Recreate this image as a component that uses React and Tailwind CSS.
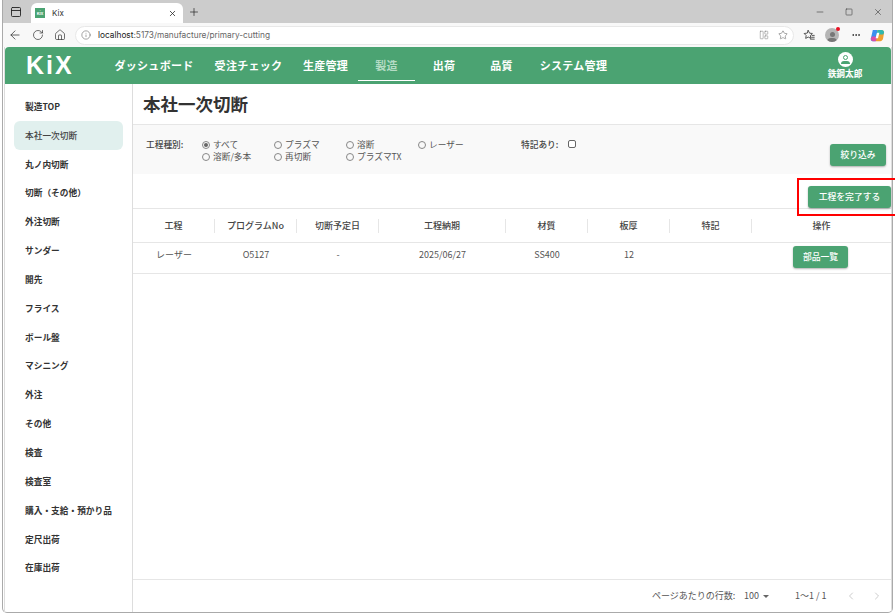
import { ArrowLeft, RotateCw, Home, Info, Star, Plus, X, Minus, Square, PanelTop, Ellipsis, ChevronLeft, ChevronRight, LayoutPanelLeft } from 'lucide-react'

const navItems = ['ダッシュボード', '受注チェック', '生産管理', '製造', '出荷', '品質', 'システム管理']
const navWidths = ['w-[100px]', 'w-[89px]', 'w-[65px]', 'w-[57px]', 'w-[58px]', 'w-[57px]', 'w-[87px]']

const sideItems = ['製造TOP', '本社一次切断', '丸ノ内切断', '切断（その他）', '外注切断', 'サンダー', '開先', 'フライス', 'ボール盤', 'マシニング', '外注', 'その他', '検査', '検査室', '購入・支給・預かり品', '定尺出荷', '在庫出荷']

const radios = ['すべて', 'プラズマ', '溶断', 'レーザー', '溶断/多本', '再切断', 'プラズマTX']

const columns = ['工程', 'プログラムNo', '切断予定日', '工程納期', '材質', '板厚', '特記', '操作']
const row = ['レーザー', 'O5127', '-', '2025/06/27', 'SS400', '12', '']

function Radio({ label, checked }) {
    return (
        <label className="flex items-center gap-[3px] h-3 text-[8.7px] text-[#555]">
            <span className="w-2 h-2 rounded-full border border-[#888] flex items-center justify-center shrink-0">
                {checked && <span className="w-1 h-1 rounded-full bg-[#666]" />}
            </span>
            {label}
        </label>
    )
}

function GreenButton({ children, className }) {
    return (
        <button className={`bg-[#4ba372] text-white text-[8.8px] font-medium rounded-[3px] shadow-[0_1px_2px_rgba(0,0,0,0.3)] ${className}`}>
            {children}
        </button>
    )
}

function Favorites() {
    return (
        <svg width="12" height="12" viewBox="0 0 16 16" fill="none" stroke="#333" strokeWidth="1.1" strokeLinejoin="round" strokeLinecap="round">
            <path d="M7 2l1.700 3.500 3.800.5-2.700 2.700.6 3.800L7 10.700 3.600 12.500l.6-3.800L1.500 6l3.800-.5z" />
            <path d="M12 8.500h3M11.500 11h3.500M10 13.500h5" />
        </svg>
    )
}

function Copilot() {
    return (
        <svg width="15" height="15" viewBox="0 0 16 16">
            <path d="M3 2h5L6 14H2.500C1 14 .5 12.500 1 11z" fill="#3b8ff0" />
            <path d="M8 2h4.500C14 2 15 3 15 5l-1 6c-.3 2-1.500 3-3 3H6z" fill="#f0a030" />
            <path d="M8 2h4.500C14 2 15 3 15 5l-1 2H7z" fill="#30b8b0" />
            <path d="M2 9h6l-2 5H3C1.500 14 .7 12.500 1 11z" fill="#d94fa8" />
            <path d="M7.500 5h2.500l-1.500 6H6z" fill="#fff" />
        </svg>
    )
}

export default function App() {
    return (
        <div className="w-[895px] h-[615px] overflow-hidden bg-white px-[2px] pb-[2px] font-['Noto_Sans_CJK_JP',sans-serif] relative">
            <div className="h-full flex flex-col border-l border-r border-b border-[#aaa] rounded-b-[5px]">
                {/* tab strip */}
                <div className="h-[23px] bg-[#cccccc] flex items-end shrink-0">
                    <div className="w-[25px] h-[23px] flex items-center justify-center">
                        <PanelTop size={12} strokeWidth={1.8} className="text-[#222]" />
                    </div>
                    <div className="ml-[3px] w-[152px] h-[20px] bg-white rounded-t-[6px] flex items-center pl-[4px] pr-[6px]">
                        <span className="w-[10px] h-[10px] bg-[#4ba372] text-white text-[4px] font-bold flex items-center justify-center">KiX</span>
                        <span className="ml-[7px] text-[8px] text-[#333] font-['Inter',sans-serif]">Kix</span>
                        <X size={9} strokeWidth={2} className="ml-auto text-[#222]" />
                    </div>
                    <div className="w-[22px] h-[23px] flex items-center justify-center">
                        <Plus size={12} strokeWidth={1.4} className="text-[#222]" />
                    </div>
                    <div className="ml-auto flex items-center h-[23px] text-[#333]">
                        <div className="w-[29px] flex justify-center"><Minus size={10} strokeWidth={1.4} /></div>
                        <div className="w-[29px] flex justify-center"><Square size={8} strokeWidth={1.6} /></div>
                        <div className="w-[29px] flex justify-center"><X size={10} strokeWidth={1.4} /></div>
                    </div>
                </div>

                {/* address bar */}
                <div className="h-[24px] bg-[#f8f8f8] flex items-center shrink-0 text-[#333]">
                    <div className="w-[23px] flex justify-center"><ArrowLeft size={14} strokeWidth={1.3} /></div>
                    <div className="w-[23px] flex justify-center"><RotateCw size={12} strokeWidth={1.4} /></div>
                    <div className="w-[22px] flex justify-center"><Home size={12} strokeWidth={1.4} /></div>
                    <div className="w-[719px] h-[19px] ml-[4px] bg-white rounded-full border border-[#e8e8e8] flex items-center pl-[5px] pr-[5px]">
                        <Info size={10} strokeWidth={1.4} className="text-[#666]" />
                        <span className="ml-[7px] text-[8.300px] text-[#666] font-['Inter',sans-serif]">
                            <span className="text-[#222]">localhost</span>:5173/manufacture/primary-cutting
                        </span>
                        <LayoutPanelLeft size={10} strokeWidth={1.2} className="ml-auto text-[#777]" />
                        <Star size={10} strokeWidth={1.2} className="ml-[9px] text-[#555]" />
                    </div>
                    <div className="w-[26px] ml-[2px] flex justify-center"><Favorites /></div>
                    <div className="w-[20px] flex justify-center relative">
                        <span className="w-[14px] h-[14px] rounded-full bg-[#b5b5b5] flex flex-col items-center justify-end overflow-hidden">
                            <span className="w-[5px] h-[5px] rounded-full bg-[#777]" />
                            <span className="w-[10px] h-[4px] rounded-t-full bg-[#777] mt-[1px]" />
                        </span>
                        <span className="absolute top-[-1px] right-[2px] w-[4px] h-[4px] rounded-full bg-[#e81123]" />
                    </div>
                    <div className="w-[24px] ml-[2px] flex justify-center"><Ellipsis size={10} strokeWidth={2} className="text-[#222]" /></div>
                    <div className="w-[18px] flex justify-center"><Copilot /></div>
                </div>

                {/* page */}
                <div className="flex-1 min-h-0 ml-[1px] flex flex-col border-l border-r border-[#ddd]">
                    <header className="h-[37px] bg-[#4ba372] rounded-t-[4px] flex items-center text-white shrink-0">
                        <span className="w-[99px] pl-[21px] text-[25px] font-bold leading-none tracking-[2px] font-['Liberation_Sans',sans-serif]">KiX</span>
                        {navItems.map((item, i) => (
                            <a key={item} className={`${navWidths[i]} h-full flex items-center justify-center text-[11px] font-bold tracking-[0.3px] ${item === '製造' ? 'text-[#b5dcc5] relative' : ''}`}>
                                {item}
                                {item === '製造' && <span className="absolute left-0 right-0 bottom-[3px] h-[1px] bg-white" />}
                            </a>
                        ))}
                        <div className="ml-auto w-[60px] mr-[16px] flex flex-col items-center">
                            <span className="w-[15px] h-[15px] rounded-full bg-white flex flex-col items-center justify-center">
                                <span className="w-[5px] h-[5px] rounded-full border border-[#4ba372]" />
                                <span className="w-[9px] h-[3px] rounded-t-full bg-[#4ba372] mt-[1px]" />
                            </span>
                            <span className="text-[8.700px] font-bold leading-[12px] mt-[1px]">鉄鋼太郎</span>
                        </div>
                    </header>

                    <div className="flex-1 min-h-0 flex">
                        {/* sidebar */}
                        <aside className="w-[128px] shrink-0 border-r border-[#ddd] pt-[8px] pl-[9px] pr-[9px]">
                            {sideItems.map((item) => (
                                <a key={item} className={`h-[28.850px] flex items-center pl-[11px] text-[8.700px] font-bold rounded-[6px] ${item === '本社一次切断' ? 'bg-[#e1f0ee] text-[#444] font-medium' : 'text-[#333]'}`}>
                                    {item}
                                </a>
                            ))}
                        </aside>

                        {/* main */}
                        <main className="flex-1 min-w-0 flex flex-col">
                            <div className="h-[41px] border-b border-[#e6e6e6] flex items-center pl-[10px] shrink-0">
                                <h1 className="text-[17.500px] font-bold text-[#333]">本社一次切断</h1>
                            </div>

                            <div className="h-[49px] bg-[#f9f9f9] flex pl-[13px] pt-[14px] pr-[5px] shrink-0 relative">
                                <span className="w-[56px] text-[8.700px] leading-3 font-medium text-[#444]">工程種別:</span>
                                <div className="w-[288px] grid grid-cols-[72px_72px_72px_72px] h-[24px]">
                                    {radios.map((label, i) => <Radio key={label} label={label} checked={i === 0} />)}
                                </div>
                                <span className="ml-[31px] w-[47px] text-[8.700px] leading-3 font-medium text-[#444]">特記あり:</span>
                                <span className="w-2 h-2 mt-[1px] rounded-[2px] border border-[#666] bg-white" />
                                <GreenButton className="ml-auto w-[56px] h-[22px] self-start mt-[5px]">絞り込み</GreenButton>
                            </div>

                            <div className="h-[35px] border-b border-[#e6e6e6] flex justify-end items-end shrink-0">
                                <GreenButton className="w-[83px] h-[22px]">工程を完了する</GreenButton>
                            </div>

                            <div className="h-[34px] border-b border-[#e6e6e6] grid grid-cols-[82px_82px_82px_127px_82px_82px_82px_1fr] items-center shrink-0">
                                {columns.map((col, i) => (
                                    <div key={col} className={`h-[14px] flex items-center justify-center text-[9px] font-medium text-[#444] ${i < 7 ? 'border-r border-[#e6e6e6]' : ''}`}>
                                        {col}
                                    </div>
                                ))}
                            </div>

                            <div className="h-[31px] border-b border-[#e6e6e6] grid grid-cols-[82px_82px_82px_127px_82px_82px_82px_1fr] items-center shrink-0 text-[9px] text-[#555]">
                                {row.map((cell, i) => (
                                    <div key={i} className="text-center -mt-[7px]">{cell}</div>
                                ))}
                                <div className="flex justify-center -mt-[3px] pr-[2px]">
                                    <GreenButton className="w-[55px] h-[22px]">部品一覧</GreenButton>
                                </div>
                            </div>

                            <div className="flex-1" />

                            <div className="h-[33px] border-t border-[#e6e6e6] flex items-center text-[9px] text-[#555] shrink-0">
                                <span className="ml-[519px] w-[92px]">ページあたりの行数:</span>
                                <span>100</span>
                                <span className="ml-[4px] w-0 h-0 border-x-[3px] border-x-transparent border-t-[3px] border-t-[#666]" />
                                <span className="ml-[26px] w-[50px]">1〜1 / 1</span>
                                <ChevronLeft size={12} strokeWidth={1.5} className="text-[#bbb]" />
                                <ChevronRight size={12} strokeWidth={1.5} className="ml-[14px] text-[#bbb]" />
                            </div>
                        </main>
                    </div>
                </div>
            </div>

            {/* annotation over the screenshot */}
            <div className="absolute left-[797px] top-[178px] w-[98px] h-[38px] border-[2px] border-r-0 border-[#ff0000]" />
        </div>
    )
}
